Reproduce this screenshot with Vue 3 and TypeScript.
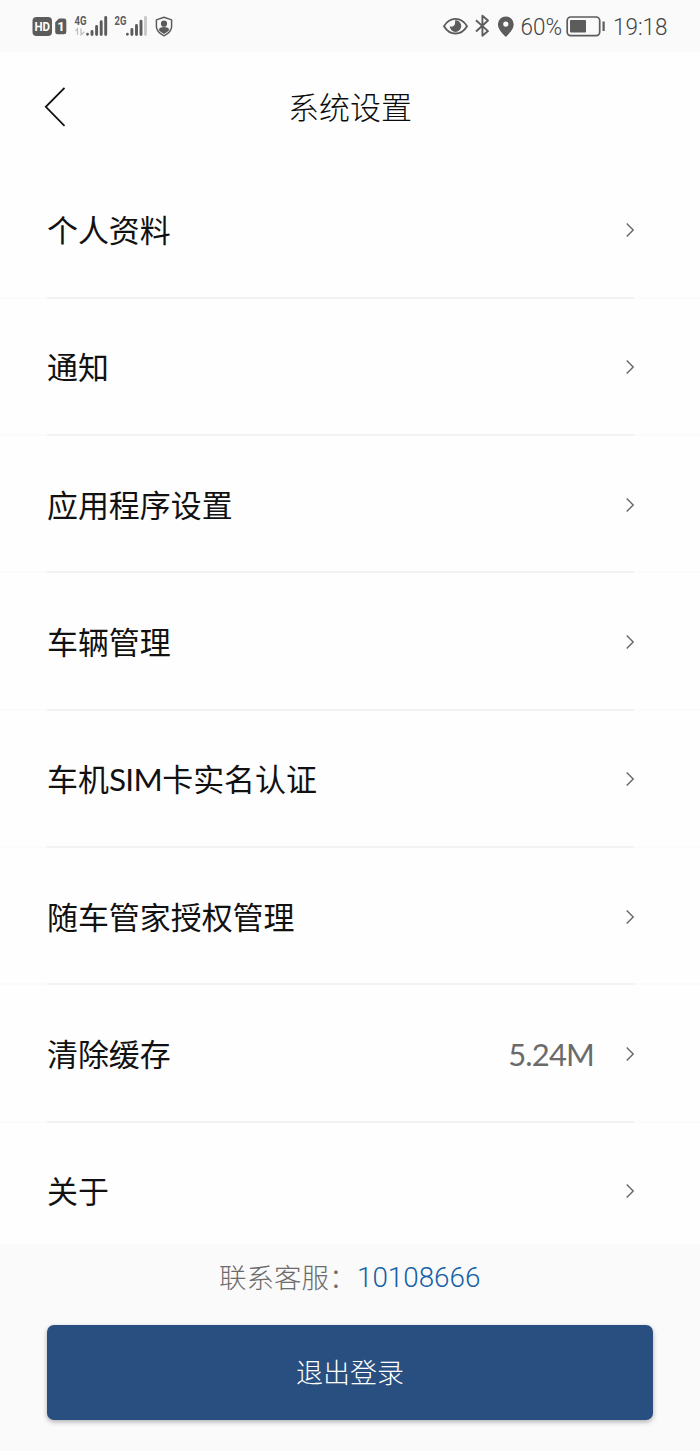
<script setup lang="ts">
interface SettingRow {
  label: string
  latin?: string
  tail?: string
  value?: string
}

const rows: SettingRow[] = [
  { label: '个人资料' },
  { label: '通知' },
  { label: '应用程序设置' },
  { label: '车辆管理' },
  { label: '车机', latin: 'SIM', tail: '卡实名认证' },
  { label: '随车管家授权管理' },
  { label: '清除缓存', value: '5.24M' },
  { label: '关于' },
]
</script>

<template>
  <div class="screen">
    <div class="status">
      <svg class="status-left" width="160" height="52" viewBox="20 0 160 52">
        <rect x="32.5" y="17" width="19.5" height="19" rx="4" fill="#5c5c5c" />
        <text class="hd" x="34.4" y="31" textLength="15.6" lengthAdjust="spacingAndGlyphs">HD</text>
        <path d="M59 18.500H64a2.300 2.300 0 0 1 2.300 2.300V32a2.300 2.300 0 0 1-2.300 2.300h-6.500a2.300 2.300 0 0 1-2.300-2.300V22.300z" fill="#5c5c5c" />
        <text class="sim-no" x="57.200" y="31">1</text>
        <text class="net" x="74.500" y="25" textLength="12" lengthAdjust="spacingAndGlyphs">4G</text>
        <path d="M77.500 35v-6.500l-2 2.300M81 28.500V35l3.500-3.200" fill="none" stroke="#bdbdbd" stroke-width="1.200" />
        <g stroke="#5c5c5c" stroke-width="2.900" stroke-linecap="round">
          <path d="M87.500 34.200v.1M92 31.500v3M96.600 26.500v8M101.200 21.800v12.700M105.700 17.500v17" />
          <path d="M127.400 34.200v.1M131.900 29.500v5M136.500 25.500v9M141 21.300v13.200" />
          <path d="M145.500 17.500v17" stroke="#c9c9c9" />
        </g>
        <text class="net" x="114.600" y="25" textLength="11.800" lengthAdjust="spacingAndGlyphs">2G</text>
        <path d="M164 17.200l7.600 2.700v6.600c0 4.500-3.500 7.300-7.600 9.300-4.100-2-7.600-4.800-7.600-9.300v-6.600z" fill="none" stroke="#5c5c5c" stroke-width="1.500" stroke-linejoin="round" />
        <circle cx="164" cy="23.700" r="3.100" fill="#5c5c5c" />
        <path d="M158.700 29.500c1-1.700 3-2.400 5.300-2.400s4.300.7 5.300 2.400c-1 2-3.200 3.500-5.300 4.400-2.100-.9-4.300-2.400-5.300-4.400z" fill="#5c5c5c" />
      </svg>
      <svg class="status-right" width="250" height="52" viewBox="430 0 250 52">
        <path d="M444 26.200c3-5 7-7.300 11.500-7.300s8.500 2.300 11.500 7.300c-3 5-7 7.300-11.500 7.300s-8.500-2.300-11.500-7.300z" fill="none" stroke="#5c5c5c" stroke-width="1.900" stroke-linejoin="round" />
        <path d="M456 20.300a5.800 5.800 0 1 1-6.300 6c1.800.9 4 .2 4.900-1.500.8-1.500.5-3.200.4-4.300z" fill="#5c5c5c" />
        <path d="M476 20.300l12 10.800-5.600 4.600V15.800l5.600 4.700L476 31.500" fill="none" stroke="#5c5c5c" stroke-width="1.900" stroke-linejoin="round" />
        <path fill-rule="evenodd" d="M505.800 16.400a7.900 7.900 0 0 1 7.900 7.900c0 4.700-4.300 9.200-6.800 11.600a1.600 1.600 0 0 1-2.200 0c-2.500-2.400-6.800-6.900-6.800-11.600a7.900 7.900 0 0 1 7.900-7.900zm0 5.100a2.600 2.600 0 1 0 0 5.200 2.600 2.600 0 0 0 0-5.200z" fill="#5c5c5c" />
        <text class="stat" x="520.500" y="35.300" textLength="41.500" lengthAdjust="spacingAndGlyphs">60%</text>
        <rect x="567.200" y="17" width="32.500" height="18.600" rx="3.500" fill="none" stroke="#5c5c5c" stroke-width="1.700" />
        <rect x="570" y="20" width="16" height="12.600" rx="1" fill="#5c5c5c" />
        <path d="M603.600 21.500v9.500" stroke="#5c5c5c" stroke-width="2.200" />
        <text class="stat" x="613" y="35.300" textLength="54.500" lengthAdjust="spacingAndGlyphs">19:18</text>
      </svg>
    </div>

    <header class="nav">
      <svg class="back" width="24" height="42" viewBox="0 0 24 42">
        <path d="M21.500 1.800L2.800 20.800l18.700 19" fill="none" stroke="#111" stroke-width="1.800" />
      </svg>
      <h1 class="title">系统设置</h1>
    </header>

    <main class="list">
      <div v-for="row in rows" :key="row.label" class="row">
        <span class="label">{{ row.label }}<span v-if="row.latin" class="latin">{{ row.latin }}</span>{{ row.tail }}</span>
        <span v-if="row.value" class="value">{{ row.value }}</span>
        <svg class="chevron" width="12" height="16" viewBox="0 0 12 16">
          <path d="M2.700 1.500L9.200 8l-6.500 6.500" fill="none" stroke="#666" stroke-width="1.400" />
        </svg>
      </div>
    </main>

    <footer class="footer">
      <p class="service"><span class="service-label">联系客服：</span><span class="phone">10108666</span></p>
      <button class="logout" type="button">退出登录</button>
    </footer>
  </div>
</template>

<style>
body {
  margin: 0;
  background: #fafafa;
}
</style>

<style scoped>
.screen {
  width: 700px;
  height: 1451px;
  display: flex;
  flex-direction: column;
  overflow: hidden;
  background: #fefefe;
  font-family: "Noto Sans CJK SC", sans-serif;
}
.status {
  height: 52px;
  flex: none;
  display: flex;
  justify-content: space-between;
  padding: 0 20px;
  background: #fafafa;
}
.hd {
  font: 700 13.500px Roboto, sans-serif;
  fill: #fff;
}
.sim-no {
  font: 700 13px Roboto, sans-serif;
  fill: #fff;
}
.net {
  font: 700 12px Roboto, sans-serif;
  fill: #5c5c5c;
}
.stat {
  font: 300 23.500px Roboto, sans-serif;
  fill: #444;
}
.nav {
  height: 109.500px;
  flex: none;
  display: grid;
  grid-template-columns: 100px 1fr 100px;
  align-items: start;
}
.back {
  margin: 34px 0 0 43px;
}
.title {
  margin: 31px 0 0;
  text-align: center;
  font-size: 31px;
  line-height: 46px;
  font-weight: 300;
  color: #0c0c0c;
}
.list {
  height: 1082.500px;
  flex: none;
  overflow: hidden;
}
.row {
  height: 137.300px;
  box-sizing: border-box;
  display: flex;
  align-items: center;
  padding: 0 64px 0 47px;
  background: linear-gradient(#f2f2f2, #f2f2f2) 47px 100% / 587px 2px no-repeat,
    linear-gradient(#fbfbfb, #fbfbfb) 0 100% / 100% 2px no-repeat;
}
.label {
  flex: 1;
  padding-bottom: 2px;
  font-size: 30.950px;
  line-height: 46px;
  color: #111;
}
.latin {
  font-family: Lato, sans-serif;
  font-size: 31.500px;
  letter-spacing: -0.600px;
}
.value {
  margin-right: 30px;
  font-family: Lato, sans-serif;
  font-size: 31px;
  line-height: 46px;
  letter-spacing: -0.850px;
  color: #6b6b6b;
}
.chevron {
  flex: none;
}
.footer {
  flex: 1;
  background: #fafafa;
  padding: 11px 47px 0;
}
.service {
  margin: 0;
  height: 43px;
  display: flex;
  line-height: 42px;
  padding-left: 172px;
  font-weight: 300;
}
.service-label {
  width: 138px;
  font-size: 27.500px;
  color: #6c6c6c;
}
.phone {
  font-family: Roboto, sans-serif;
  font-size: 27.800px;
  line-height: 45px;
  color: #1260a8;
}
.logout {
  display: block;
  width: 606px;
  height: 95px;
  margin: 27px 0 0;
  padding: 0 0 2px;
  border: 0;
  border-radius: 7px;
  background: #294f80;
  box-shadow: 0 2px 5px rgba(0, 0, 0, 0.300);
  color: #fff;
  font-family: inherit;
  font-size: 27px;
  font-weight: 300;
}
</style>
